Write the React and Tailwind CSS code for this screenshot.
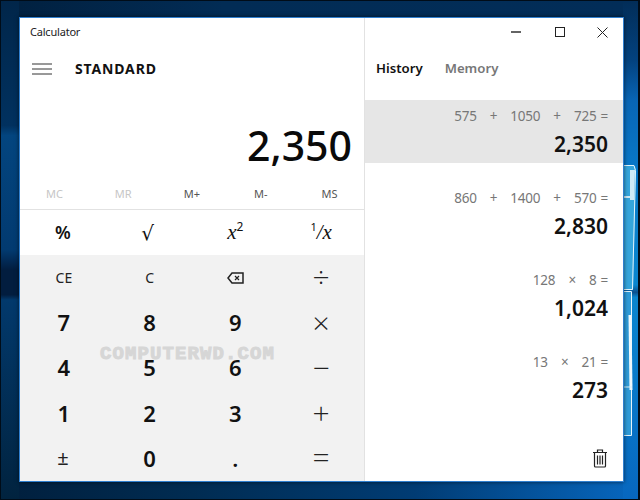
const memoryKeys = [
  { label: 'MC', on: false },
  { label: 'MR', on: false },
  { label: 'M+', on: true },
  { label: 'M-', on: true },
  { label: 'MS', on: true },
];

const history = [
  { parts: ['575', '+', '1050', '+', '725'], result: '2,350', active: true },
  { parts: ['860', '+', '1400', '+', '570'], result: '2,830' },
  { parts: ['128', '×', '8'], result: '1,024' },
  { parts: ['13', '×', '21'], result: '273' },
];

const Wallpaper = () => (
  <svg className="absolute inset-0" width="640" height="500" viewBox="0 0 640 500" preserveAspectRatio="none">
    <defs>
      <linearGradient id="bottomGrad" x1="0" x2="1" y1="0" y2="0">
        <stop offset="0" stopColor="#011f3d" />
        <stop offset="0.3" stopColor="#012c52" />
        <stop offset="0.65" stopColor="#013c74" />
        <stop offset="1" stopColor="#0767bf" />
      </linearGradient>
      <linearGradient id="topGrad" x1="0" x2="1" y1="0" y2="0">
        <stop offset="0" stopColor="#01203f" />
        <stop offset="0.35" stopColor="#022c55" />
        <stop offset="1" stopColor="#022d58" />
      </linearGradient>
      <linearGradient id="leftGrad" x1="0" x2="0" y1="0" y2="1">
        <stop offset="0" stopColor="#01264a" />
        <stop offset="0.25" stopColor="#01315f" />
        <stop offset="0.27" stopColor="#03457f" />
        <stop offset="0.5" stopColor="#023a70" />
        <stop offset="0.54" stopColor="#021d3f" />
        <stop offset="0.59" stopColor="#021d3f" />
        <stop offset="0.6" stopColor="#02396c" />
        <stop offset="1" stopColor="#01233f" />
      </linearGradient>
      <linearGradient id="rightGrad" x1="0" x2="0" y1="0" y2="1">
        <stop offset="0" stopColor="#022d58" />
        <stop offset="0.12" stopColor="#03427f" />
        <stop offset="0.2" stopColor="#0865b5" />
        <stop offset="0.34" stopColor="#0878c8" />
        <stop offset="0.57" stopColor="#0a86cf" />
        <stop offset="0.585" stopColor="#0a4f8d" />
        <stop offset="0.595" stopColor="#0a86cf" />
        <stop offset="0.85" stopColor="#0873c6" />
        <stop offset="1" stopColor="#0767bf" />
      </linearGradient>
    </defs>
    <rect width="640" height="500" fill="#000c18" />
    <rect x="1" y="1" width="637" height="18" fill="url(#topGrad)" />
    <rect x="1" y="480" width="637" height="19" fill="url(#bottomGrad)" />
    <rect x="1" y="1" width="18" height="498" fill="url(#leftGrad)" />
    <rect x="623" y="1" width="15" height="498" fill="url(#rightGrad)" />
    {/* window panes of the wallpaper, right edge */}
    <path d="M624 166h11l1 5-3 119h-9z" fill="#35a5dc" stroke="none" />
    <path d="M624 165.5h10l1.500 5-3 119h-8.500" fill="none" stroke="#e3f4fc" strokeWidth="1" />
    <path d="M630 170h5l-1 30h-4z" fill="#cfeaf6" />
    <path d="M624 197h9" stroke="#cfe9f6" strokeWidth="2" />
    <path d="M624 292h8v143h-8z" fill="#2f9bd8" stroke="none" />
    <path d="M624 291.500h7.500v144h-7.500" fill="none" stroke="#e3f4fc" strokeWidth="1" />
    <path d="M630 315l1 75" stroke="#eef8fd" strokeWidth="3" />
    <path d="M624 387h8" stroke="#d8eef8" strokeWidth="1" />
  </svg>
);

const HamburgerIcon = () => (
  <svg className="mt-[2px]" width="20" height="12" viewBox="0 0 20 12" fill="none" stroke="#333" strokeWidth="1">
    <path d="M0 1h20M0 6h20M0 11h20" />
  </svg>
);

const WindowButtons = () => (
  <div className="flex h-full items-center justify-end pr-[15px] text-[#222]">
    <svg width="10" height="10" viewBox="0 0 10 10" fill="none" stroke="currentColor"><path d="M0 5h10" strokeWidth="1.4" /></svg>
    <svg className="ml-[34px]" width="10" height="10" viewBox="0 0 10 10" fill="none" stroke="currentColor"><rect x="0.5" y="0.5" width="9" height="9" strokeWidth="1" /></svg>
    <svg className="ml-[32px]" width="11" height="11" viewBox="0 0 11 11" fill="none" stroke="currentColor"><path d="M0.5 0.5l10 10M10.5 0.5l-10 10" strokeWidth="1" /></svg>
  </div>
);

const BackspaceIcon = () => (
  <svg width="17" height="12" viewBox="0 0 17 12" fill="none" stroke="#222">
    <path d="M5 1h11v10H5L1 6z" strokeWidth="1.5" />
    <path d="M8 4l4 4M12 4l-4 4" strokeWidth="1.2" />
  </svg>
);

const TrashIcon = () => (
  <svg width="16" height="19" viewBox="0 0 16 19" fill="none" stroke="#222" strokeWidth="1.2">
    <path d="M1 3.5h14M5.5 3.5V1h5v2.5" />
    <path d="M2.5 3.5v13.5a1 1 0 001 1h9a1 1 0 001-1V3.5" />
    <path d="M5.5 6.5v9M8 6.5v9M10.5 6.5v9" />
  </svg>
);

const OpKey = ({ children, className = '' }) => (
  <div className={`flex items-center justify-center font-['Open_Sans',sans-serif] text-[30px] font-light leading-none text-[#222] ${className}`}>{children}</div>
);

const DigitKey = ({ children }) => (
  <div className="flex items-center justify-center text-[22px] font-semibold text-[#111]">{children}</div>
);

const HistoryItem = ({ parts, result, active }) => (
  <div className={`flex h-[63px] flex-col items-end pr-[15px] pt-[5px] ${active ? 'bg-[#e6e6e6]' : ''}`}>
    <div className="flex h-[22px] items-center text-[13.5px] tracking-[-0.2px] text-[#777]">
      {parts.map((part, i) => (
        <span key={i} className={i > 0 ? 'ml-[13px]' : ''}>{part}</span>
      ))}
      <span className="ml-[4px]">=</span>
    </div>
    <div className="mt-[2px] text-[21px] font-semibold leading-[30px] text-[#111]">{result}</div>
  </div>
);

export default function App() {
  return (
    <div className="relative h-[500px] w-[640px] overflow-hidden font-['Noto_Sans',sans-serif]">
      <Wallpaper />
      <div className="relative pl-[19px] pt-[17px]">
        <div className="flex h-[465px] w-[605px] border border-[#2f7fcf] bg-white shadow-[0_0_4px_rgba(0,0,0,0.6)]">
          {/* calculator side */}
          <div className="flex w-[345px] flex-col border-r border-[#e2e2e2]">
            <div className="flex h-[28px] items-center pl-[10px] text-[11px] tracking-[-0.2px] text-[#222]">Calculator</div>
            <div className="flex h-[46px] items-center pb-[2px] pl-[12px]">
              <HamburgerIcon />
              <span className="ml-[23px] text-[14px] font-bold tracking-[0.85px] text-[#111]">STANDARD</span>
            </div>
            <div className="flex h-[88px] items-center justify-end pr-[12px] pt-[18px] text-[41px] font-medium leading-none text-[#0a0a0a]">2,350</div>
            <div className="grid h-[30px] grid-cols-5 border-b border-[#e2e2e2] pb-[1px] text-[11px]">
              {memoryKeys.map((key) => (
                <div key={key.label} className={`flex items-center justify-center ${key.on ? 'text-[#555]' : 'text-[#c6c6c6]'}`}>{key.label}</div>
              ))}
            </div>
            <div className="grid h-[45px] grid-cols-4 pl-[1px] text-[#111]">
              <div className="flex items-center justify-center pr-[2px] text-[18px] font-semibold">%</div>
              <div className="flex items-center justify-center pr-[4px] font-['DejaVu_Sans',sans-serif] text-[20px]">√</div>
              <div className="flex items-center justify-center font-['Liberation_Serif',serif] text-[21px] italic">x<sup className="font-['Noto_Sans',sans-serif] text-[12px] not-italic">2</sup></div>
              <div className="flex items-center justify-center font-['Liberation_Serif',serif] text-[21px] italic"><sup className="font-['Noto_Sans',sans-serif] text-[11px] not-italic">1</sup>/x</div>
            </div>
            <div className="grid flex-1 auto-rows-fr grid-cols-4 bg-[#f2f2f2] pl-[1px]">
              <div className="flex items-center justify-center text-[14px] text-[#222]">CE</div>
              <div className="flex items-center justify-center text-[14px] text-[#222]">C</div>
              <div className="flex items-center justify-center"><BackspaceIcon /></div>
              <OpKey className="pb-[2px]">÷</OpKey>
              <DigitKey>7</DigitKey>
              <DigitKey>8</DigitKey>
              <DigitKey>9</DigitKey>
              <OpKey>×</OpKey>
              <DigitKey>4</DigitKey>
              <DigitKey>5</DigitKey>
              <DigitKey>6</DigitKey>
              <OpKey>−</OpKey>
              <DigitKey>1</DigitKey>
              <DigitKey>2</DigitKey>
              <DigitKey>3</DigitKey>
              <OpKey>+</OpKey>
              <div className="flex items-center justify-center pr-[2px] text-[20px] text-[#222]">±</div>
              <DigitKey>0</DigitKey>
              <DigitKey>.</DigitKey>
              <OpKey className="pb-[2px]">=</OpKey>
            </div>
          </div>
          {/* history side */}
          <div className="flex flex-1 flex-col">
            <div className="h-[28px]"><WindowButtons /></div>
            <div className="flex h-[46px] items-center gap-[22px] pl-[11px] text-[13.2px] font-semibold">
              <span className="text-[#111]">History</span>
              <span className="text-[#777]">Memory</span>
            </div>
            <div className="mt-[8px] flex flex-col gap-[19px]">
              {history.map((item) => (
                <HistoryItem key={item.result} {...item} />
              ))}
            </div>
            <div className="mt-auto flex justify-end pb-[13px] pr-[15px]"><TrashIcon /></div>
          </div>
        </div>
      </div>
      {/* site watermark */}
      <div className="absolute left-[100px] top-[345px] font-['Liberation_Mono',monospace] text-[19px] font-bold leading-none tracking-[1.1px] text-[#d6d6d6] [-webkit-text-stroke:1px_#d6d6d6]">COMPUTERWD.COM</div>
    </div>
  );
}
